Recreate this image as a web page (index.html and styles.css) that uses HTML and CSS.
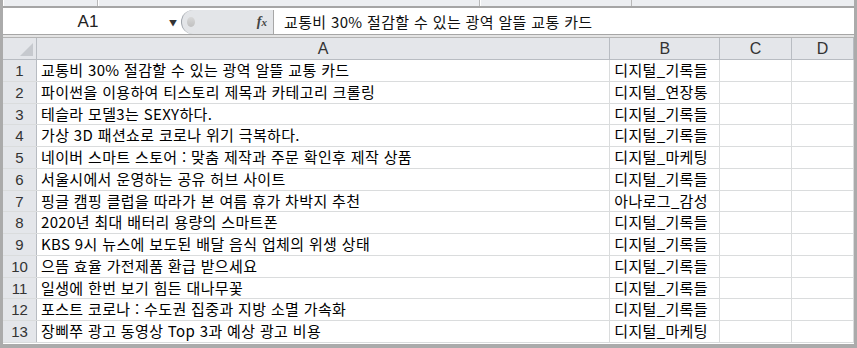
FILE: index.html
```html
<!DOCTYPE html>
<html lang="ko">
<head>
    <meta charset="UTF-8">
    <title>시트</title>
    <link rel="stylesheet" href="styles.css">
</head>
<body>
    <div class="window">
        <!-- 상단 리본 경계 -->
        <div class="top-strip">
            <span class="seg seg-1"></span>
            <span class="seg seg-2"></span>
            <span class="seg seg-3"></span>
        </div>

        <!-- 수식 입력줄 -->
        <div class="formula-bar">
            <div class="name-box">
                <span class="cell-ref">A1</span>
                <span class="drop">&#9660;</span>
            </div>
            <div class="fx-area">
                <span class="knob"></span>
                <span class="fx"><i>f</i><i class="x">x</i></span>
            </div>
            <div class="formula-text">교통비 30% 절감할 수 있는 광역 알뜰 교통 카드</div>
        </div>

        <!-- 시트 -->
        <div class="sheet">
            <div class="row head">
                <div class="num corner"><span class="tri"></span></div>
                <div class="cell col-a">A</div>
                <div class="cell col-b">B</div>
                <div class="cell col-c">C</div>
                <div class="cell col-d">D</div>
            </div>
            <div class="row"><div class="num">1</div><div class="cell col-a">교통비 30% 절감할 수 있는 광역 알뜰 교통 카드</div><div class="cell col-b">디지털_기록들</div><div class="cell col-c"></div><div class="cell col-d"></div></div>
            <div class="row"><div class="num">2</div><div class="cell col-a">파이썬을 이용하여 티스토리 제목과 카테고리 크롤링</div><div class="cell col-b">디지털_연장통</div><div class="cell col-c"></div><div class="cell col-d"></div></div>
            <div class="row"><div class="num">3</div><div class="cell col-a">테슬라 모델3는 SEXY하다.</div><div class="cell col-b">디지털_기록들</div><div class="cell col-c"></div><div class="cell col-d"></div></div>
            <div class="row"><div class="num">4</div><div class="cell col-a">가상 3D 패션쇼로 코로나 위기 극복하다.</div><div class="cell col-b">디지털_기록들</div><div class="cell col-c"></div><div class="cell col-d"></div></div>
            <div class="row"><div class="num">5</div><div class="cell col-a">네이버 스마트 스토어 : 맞춤 제작과 주문 확인후 제작 상품</div><div class="cell col-b">디지털_마케팅</div><div class="cell col-c"></div><div class="cell col-d"></div></div>
            <div class="row"><div class="num">6</div><div class="cell col-a">서울시에서 운영하는 공유 허브 사이트</div><div class="cell col-b">디지털_기록들</div><div class="cell col-c"></div><div class="cell col-d"></div></div>
            <div class="row"><div class="num">7</div><div class="cell col-a">핑글 캠핑 클럽을 따라가 본 여름 휴가 차박지 추천</div><div class="cell col-b">아나로그_감성</div><div class="cell col-c"></div><div class="cell col-d"></div></div>
            <div class="row"><div class="num">8</div><div class="cell col-a">2020년 최대 배터리 용량의 스마트폰</div><div class="cell col-b">디지털_기록들</div><div class="cell col-c"></div><div class="cell col-d"></div></div>
            <div class="row"><div class="num">9</div><div class="cell col-a">KBS 9시 뉴스에 보도된 배달 음식 업체의 위생 상태</div><div class="cell col-b">디지털_기록들</div><div class="cell col-c"></div><div class="cell col-d"></div></div>
            <div class="row"><div class="num">10</div><div class="cell col-a">으뜸 효율 가전제품 환급 받으세요</div><div class="cell col-b">디지털_기록들</div><div class="cell col-c"></div><div class="cell col-d"></div></div>
            <div class="row"><div class="num">11</div><div class="cell col-a">일생에 한번 보기 힘든 대나무꽃</div><div class="cell col-b">디지털_기록들</div><div class="cell col-c"></div><div class="cell col-d"></div></div>
            <div class="row"><div class="num">12</div><div class="cell col-a">포스트 코로나 : 수도권 집중과 지방 소멸 가속화</div><div class="cell col-b">디지털_기록들</div><div class="cell col-c"></div><div class="cell col-d"></div></div>
            <div class="row"><div class="num">13</div><div class="cell col-a">장삐쭈 광고 동영상 Top 3과 예상 광고 비용</div><div class="cell col-b">디지털_마케팅</div><div class="cell col-c"></div><div class="cell col-d"></div></div>
        </div>
    </div>
</body>
</html>
```

FILE: styles.css
```css
/* 기본 */
body {
    margin: 0;
    padding: 0;
    background-color: #ababab;
    font-family: "Noto Sans CJK KR", "Noto Sans", sans-serif;
}

.window {
    width: 851px;
    height: 344px;
    margin-left: 3px;
    background-color: #fff;
    overflow: hidden;
}

/* 상단 띠 */
.top-strip {
    height: 6px;
    background-color: #eceef1;
    border-bottom: 2px solid #a5a5a5;
    display: flex;
}

.seg {
    border-right: 1px solid #b8b8b8;
    border-left: 1px solid #fff;
}

.seg-1 { width: 93px; }
.seg-2 { width: 380px; }
.seg-3 { width: 150px; }

/* 수식 입력줄 */
.formula-bar {
    height: 24px;
    margin-top: 2px;
    display: flex;
    border-bottom: 1px solid #a6a6a6;
    box-shadow: 0 2px 0 #e4e4e4, 0 3px 0 #b4b4b4;
    margin-bottom: 3px;
}

.name-box {
    width: 178px;
    display: flex;
    align-items: center;
}

.cell-ref {
    flex: 1;
    text-align: center;
    font-family: "Liberation Sans", Arial, sans-serif;
    font-size: 17px;
    color: #222;
    padding-left: 4px;
}

.drop {
    font-size: 8px;
    color: #333;
    margin-right: 4px;
}

.fx-area {
    width: 91px;
    background-color: #e3e5e8;
    border-radius: 12px 0 0 12px;
    border-left: 1px solid #9ea3aa;
    border-right: 1px solid #a7a7a7;
    display: flex;
    align-items: center;
    justify-content: space-between;
}

.knob {
    width: 8px;
    height: 10px;
    margin-left: 5px;
    border-radius: 50%;
    background: linear-gradient(#d8d8d8, #c0c0c0);
}

.fx {
    font-family: "Liberation Serif", serif;
    font-weight: bold;
    font-size: 14px;
    color: #444;
    margin-right: 6px;
}

.fx .x {
    font-size: 11px;
}

.formula-text {
    padding-left: 10px;
    font-size: 15px;
    letter-spacing: 0.35px;
    line-height: 23px;
    color: #111;
}

/* 시트 */
.sheet {
    display: flex;
    flex-direction: column;
}

.row {
    display: flex;
    height: 21.77px;
    border-bottom: 1px solid #dadcdd;
    box-sizing: border-box;
    flex-shrink: 0;
}

.row.head {
    height: 22px;
    background-color: #e4e6ea;
    border-bottom: 1px solid #b8bcc2;
}

.num {
    width: 33px;
    flex-shrink: 0;
    background-color: #e4e6ea;
    border-right: 1px solid #b8bcc2;
    text-align: center;
    font-family: "Liberation Sans", Arial, sans-serif;
    font-size: 15px;
    line-height: 21px;
    color: #333;
}

.corner {
    position: relative;
}

.tri {
    position: absolute;
    right: 3px;
    bottom: 3px;
    width: 0;
    height: 0;
    border-left: 13px solid transparent;
    border-bottom: 13px solid #c6c9ce;
}

.cell {
    box-sizing: border-box;
    border-right: 1px solid #dadcdd;
    padding-left: 4px;
    font-size: 15px;
    letter-spacing: 0.35px;
    line-height: 20px;
    color: #000;
    white-space: nowrap;
    overflow: hidden;
}

.head .cell {
    text-align: center;
    padding-left: 0;
    letter-spacing: 0;
    border-right: 1px solid #b8bcc2;
    font-family: "Liberation Sans", Arial, sans-serif;
    font-size: 16px;
    line-height: 21px;
    color: #333;
}

.col-a { width: 574px; }
.col-b { width: 110px; }
.col-c { width: 72px; }
.col-d { width: 62px; }
```
